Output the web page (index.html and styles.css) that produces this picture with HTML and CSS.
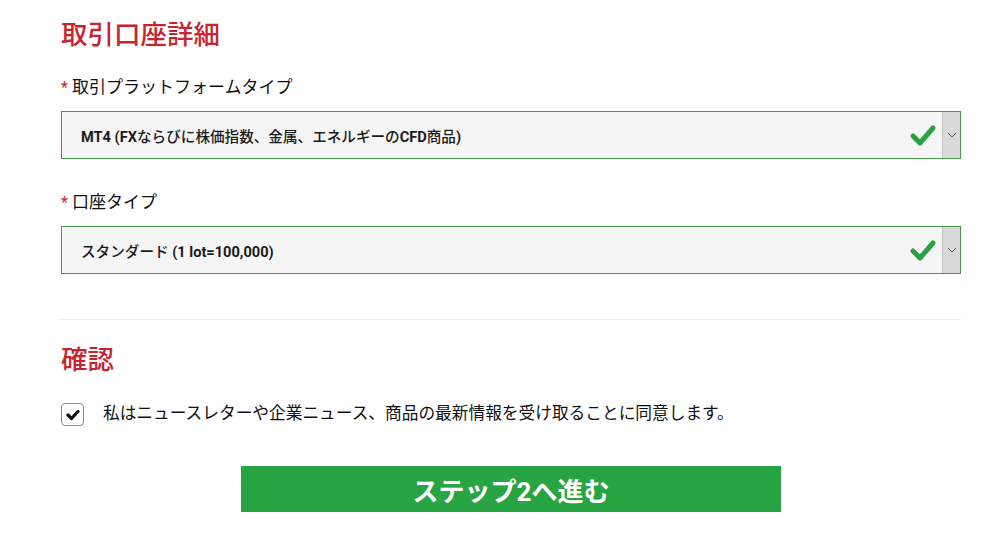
FILE: index.html
```html
<!DOCTYPE html>
<html lang="ja">
<head>
    <meta charset="UTF-8">
    <meta name="viewport" content="width=device-width, initial-scale=1.0">
    <title>取引口座詳細</title>
    <link rel="stylesheet" href="styles.css">
</head>
<body>
    <div class="form">
        <h2 class="section-title">取引口座詳細</h2>

        <div class="field-label"><span class="req">*</span>取引プラットフォームタイプ</div>
        <div class="select-box">
            <span class="select-text"><b>MT4 (FX</b>ならびに株価指数、金属、エネルギーの<b>CFD</b>商品<b>)</b></span>
            <svg class="ok" width="28" height="24" viewBox="0 0 28 24"><polyline points="4,13 11,20 24,5" fill="none" stroke="#2aa244" stroke-width="5" stroke-linecap="round" stroke-linejoin="round"/></svg>
            <div class="arrow"><svg width="10" height="6" viewBox="0 0 10 6"><polyline points="1,1 5,5 9,1" fill="none" stroke="#555" stroke-width="1"/></svg></div>
        </div>

        <div class="field-label second"><span class="req">*</span>口座タイプ</div>
        <div class="select-box">
            <span class="select-text">スタンダード <b>(1 lot=100,000)</b></span>
            <svg class="ok" width="28" height="24" viewBox="0 0 28 24"><polyline points="4,13 11,20 24,5" fill="none" stroke="#2aa244" stroke-width="5" stroke-linecap="round" stroke-linejoin="round"/></svg>
            <div class="arrow"><svg width="10" height="6" viewBox="0 0 10 6"><polyline points="1,1 5,5 9,1" fill="none" stroke="#555" stroke-width="1"/></svg></div>
        </div>

        <hr class="divider">

        <h2 class="section-title">確認</h2>

        <label class="agree">
            <span class="checkbox"><svg width="14" height="12" viewBox="0 0 14 12"><polyline points="2,6 5.5,9.5 12,2.5" fill="none" stroke="#111" stroke-width="3.2" stroke-linecap="round" stroke-linejoin="round"/></svg></span>
            <span class="agree-text">私はニュースレターや企業ニュース、商品の最新情報を受け取ることに同意します。</span>
        </label>

        <div class="actions">
            <button class="next-btn">ステップ2へ進む</button>
        </div>
    </div>
</body>
</html>
```

FILE: styles.css
```css
body {
    margin: 0;
    background: #fff;
    font-family: Roboto, "Noto Sans CJK JP", sans-serif;
    color: #111;
}

.form {
    width: 900px;
    margin-left: 61px;
    display: flex;
    flex-direction: column;
}

.section-title {
    margin: 18px 0 0 0;
    height: 34px;
    line-height: 34px;
    font-size: 26.5px;
    font-weight: 500;
    color: #c8242e;
}

.field-label {
    margin-top: 23px;
    height: 24px;
    line-height: 24px;
    font-size: 17px;
    color: #111;
}
.field-label.second {
    margin-top: 31px;
}
.req {
    color: #c8242e;
    margin-right: 4px;
    font-size: 16px;
}

.select-box {
    margin-top: 12px;
    height: 46px;
    border: 1px solid #4b9a4b;
    background: #f5f5f5;
    display: flex;
    align-items: center;
}
.select-text {
    flex: 1;
    padding-left: 19px;
    font-size: 14.6px;
    font-weight: 500;
    color: #1a1a1a;
}
.select-text b {
    font-weight: 700;
}
.ok {
    margin-right: 5px;
}
.arrow {
    width: 17px;
    height: 100%;
    background: #d9d9d9;
    border-left: 1px solid #c4c4c4;
    display: flex;
    align-items: center;
    justify-content: center;
}

.divider {
    margin: 45px 0 0 0;
    border: 0;
    border-top: 1px solid #ebebeb;
    height: 0;
}

.divider + .section-title {
    margin-top: 23px;
}

.agree {
    margin-top: 26px;
    display: flex;
    align-items: center;
}
.checkbox {
    width: 21px;
    height: 21px;
    border: 1px solid #8a8a8a;
    border-radius: 4px;
    background: #fff;
    display: flex;
    align-items: center;
    justify-content: center;
}
.agree-text {
    margin-left: 19px;
    margin-top: -5px;
    font-size: 16.7px;
    color: #111;
}

.actions {
    margin-top: 40px;
    display: flex;
    justify-content: center;
}
.next-btn {
    width: 540px;
    height: 46px;
    border: 0;
    background: #29a443;
    color: #fff;
    font-family: Roboto, "Noto Sans CJK JP", sans-serif;
    font-size: 26px;
    font-weight: 700;
    padding: 0;
}
```
